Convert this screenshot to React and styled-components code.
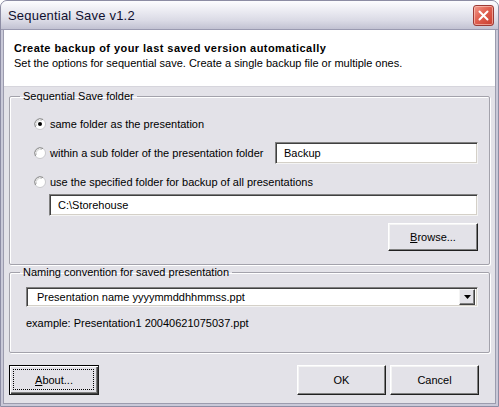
import React from "react";
import styled, { createGlobalStyle } from "styled-components";

const Global = createGlobalStyle`
  html, body { margin: 0; padding: 0; background: #ffffff; }
  body { font-family: "Liberation Sans", Arial, sans-serif; font-size: 11px; color: #000; }
  * { box-sizing: border-box; }
`;

const Window = styled.div`
  width: 499px;
  height: 407px;
  display: flex;
  flex-direction: column;
  border: 1px solid #8d8da4;
  border-radius: 7px 7px 0 0;
  overflow: hidden;
  background: #c8c8d6;
`;

const TitleBar = styled.div`
  height: 28px;
  flex: none;
  display: flex;
  align-items: center;
  justify-content: space-between;
  padding: 0 4px 0 7px;
  background: linear-gradient(#fdfdff 0%, #eeeef4 30%, #dadae5 70%, #c2c2d2 100%);
`;

const Title = styled.span`
  font-family: "Liberation Sans", Arial, sans-serif;
  font-size: 13px;
  color: #101030;
  letter-spacing: 0.2px;
`;

const CloseButton = styled.div`
  width: 21px;
  height: 21px;
  border-radius: 3px;
  border: 1px solid #9b3a35;
  background: linear-gradient(135deg, #f29a8c 0%, #e06050 45%, #c83c2e 100%);
  display: flex;
  align-items: center;
  justify-content: center;
  box-shadow: inset 0 0 0 1px rgba(255, 210, 200, 0.6);
`;

const Frame = styled.div`
  flex: 1;
  display: flex;
  padding: 0 2px 2px;
  border-top: 1px solid #9a9ab0;
  background: #c9c9d8;
`;

const Client = styled.div`
  flex: 1;
  display: flex;
  flex-direction: column;
  background: #e3e2e8;
  border: 1px solid #9c9cae;
  border-top: none;
`;

const Header = styled.div`
  height: 57px;
  flex: none;
  background: #ffffff;
  padding: 11px 0 0 10px;
  line-height: 15px;
  border-bottom: 1px solid #d6d5dc;
`;

const HeaderTitle = styled.div`
  font-weight: bold;
  font-size: 11px;
  letter-spacing: 0.45px;
`;

const Content = styled.div`
  display: flex;
  flex-direction: column;
  padding: 0 5px 0 5px;
`;

const Group = styled.fieldset`
  margin: ${(p) => p.$mt}px 0 0 0;
  padding: ${(p) => p.$pad};
  border: 1px solid #a3a2ab;
  box-shadow: inset 1px 1px 0 #ffffff, 1px 1px 0 #ffffff;
  border-radius: 2px;
  display: flex;
  flex-direction: column;
  height: ${(p) => p.$h}px;
`;

const Legend = styled.legend`
  margin-left: ${(p) => p.$ml}px;
  padding: 0 3px 0 3px;
  font-size: 11px;
  line-height: 14px;
`;

const OptionRow = styled.div`
  display: flex;
  align-items: center;
  height: ${(p) => p.$h || 22}px;
  margin-top: ${(p) => p.$mt || 0}px;
`;

const Label = styled.span`
  margin-left: 4px;
  white-space: nowrap;
`;

const Spacer = styled.div`
  flex: 1;
`;

const TextField = styled.div`
  height: ${(p) => p.$h || 22}px;
  width: ${(p) => (p.$w ? p.$w + "px" : "auto")};
  flex: none;
  margin-left: ${(p) => p.$ml || 0}px;
  margin-top: ${(p) => p.$mt || 0}px;
  background: #ffffff;
  border-top: 1px solid #808080;
  border-left: 1px solid #808080;
  border-right: 1px solid #f4f4f4;
  border-bottom: 1px solid #f4f4f4;
  box-shadow: inset 1px 1px 0 #404040, inset -1px -1px 0 #d4d0c8;
  display: flex;
  align-items: center;
  padding-left: ${(p) => p.$pl || 8}px;
`;

const ButtonRow = styled.div`
  display: flex;
  justify-content: flex-end;
  gap: 4px;
  margin-top: ${(p) => p.$mt || 0}px;
`;

const Button = styled.div`
  width: ${(p) => p.$w || 90}px;
  height: ${(p) => p.$h || 29}px;
  display: flex;
  align-items: center;
  justify-content: center;
  background: #e3e2e8;
  border-top: 1px solid ${(p) => (p.$default ? "#000" : "#ffffff")};
  border-left: 1px solid ${(p) => (p.$default ? "#000" : "#ffffff")};
  border-right: 1px solid #202020;
  border-bottom: 1px solid #202020;
  box-shadow: ${(p) =>
    p.$default
      ? "inset 1px 1px 0 #ffffff, inset -1px -1px 0 #404040, inset -2px -2px 0 #808080"
      : "inset -1px -1px 0 #808080, inset 1px 1px 0 #f4f4f4"};
  position: relative;
`;

const Focus = styled.span`
  position: absolute;
  inset: 3px 4px 4px 3px;
  border: 1px dotted #000;
  pointer-events: none;
`;

const U = styled.span`
  text-decoration: underline;
`;

const Combo = styled(TextField)`
  padding-right: 2px;
  justify-content: space-between;
`;

const DropButton = styled.div`
  width: 16px;
  height: 16px;
  background: #e3e2e8;
  border-top: 1px solid #f4f4f4;
  border-left: 1px solid #f4f4f4;
  border-right: 1px solid #404040;
  border-bottom: 1px solid #404040;
  box-shadow: inset -1px -1px 0 #808080;
  display: flex;
  align-items: center;
  justify-content: center;
`;

const Example = styled.div`
  margin-top: 10px;
`;

const Footer = styled.div`
  display: flex;
  justify-content: space-between;
  padding: 0 16px 0 5px;
  margin-top: 12px;
`;

const Radio = ({ checked }) => (
  <svg width="12" height="12" viewBox="0 0 12 12">
    <circle cx="6" cy="6" r="5.5" fill="#ffffff" stroke="#c8c8cc" />
    <path d="M1.5 9 A5.5 5.5 0 0 1 9 1.5" fill="none" stroke="#8a8a8a" strokeWidth="1" />
    <path d="M2.5 8 A4.2 4.2 0 0 1 8 2.5" fill="none" stroke="#d0d0d0" strokeWidth="1" />
    {checked && <circle cx="6" cy="6" r="2" fill="#000" />}
  </svg>
);

const Arrow = () => (
  <svg width="7" height="4" viewBox="0 0 7 4">
    <path d="M0 0 H7 L3.5 4 Z" fill="#000" />
  </svg>
);

const CloseX = () => (
  <svg width="11" height="11" viewBox="0 0 11 11">
    <path d="M1.5 1.5 L9.5 9.5 M9.5 1.5 L1.5 9.5" stroke="#ffffff" strokeWidth="2" strokeLinecap="round" />
  </svg>
);

export default function App() {
  return (
    <>
      <Global />
      <Window>
        <TitleBar>
          <Title>Sequential Save v1.2</Title>
          <CloseButton>
            <CloseX />
          </CloseButton>
        </TitleBar>
        <Frame>
          <Client>
            <Header>
              <HeaderTitle>Create backup of your last saved version automatically</HeaderTitle>
              <div>Set the options for sequential save. Create a single backup file or multiple ones.</div>
            </Header>
            <Content>
              <Group $mt={2} $h={176} $pad="10px 11px 0 24px">
                <Legend $ml={-14}>Sequential Save folder</Legend>
                <OptionRow $h={22}>
                  <Radio checked />
                  <Label>same folder as the presentation</Label>
                </OptionRow>
                <OptionRow $h={22} $mt={7}>
                  <Radio />
                  <Label>within a sub folder of the presentation folder</Label>
                  <Spacer />
                  <TextField $w={203}>Backup</TextField>
                </OptionRow>
                <OptionRow $h={22} $mt={7}>
                  <Radio />
                  <Label>use the specified folder for backup of all presentations</Label>
                </OptionRow>
                <TextField $ml={15} $mt={1} $h={22}>
                  C:\Storehouse
                </TextField>
                <ButtonRow $mt={7}>
                  <Button $w={90} $h={28}>
                    <span>
                      <U>B</U>rowse...
                    </span>
                  </Button>
                </ButtonRow>
              </Group>
              <Group $mt={0} $h={88} $pad="8px 11px 0 16px">
                <Legend $ml={-6}>Naming convention for saved presentation</Legend>
                <Combo $h={20} $pl={10}>
                  <span>Presentation name yyyymmddhhmmss.ppt</span>
                  <DropButton>
                    <Arrow />
                  </DropButton>
                </Combo>
                <Example>example: Presentation1 20040621075037.ppt</Example>
              </Group>
            </Content>
            <Footer>
              <Button $default $w={90} $h={30}>
                <Focus />
                <span>
                  <U>A</U>bout...
                </span>
              </Button>
              <ButtonRow>
                <Button $w={89} $h={30}>OK</Button>
                <Button $w={89} $h={30}>Cancel</Button>
              </ButtonRow>
            </Footer>
          </Client>
        </Frame>
      </Window>
    </>
  );
}
